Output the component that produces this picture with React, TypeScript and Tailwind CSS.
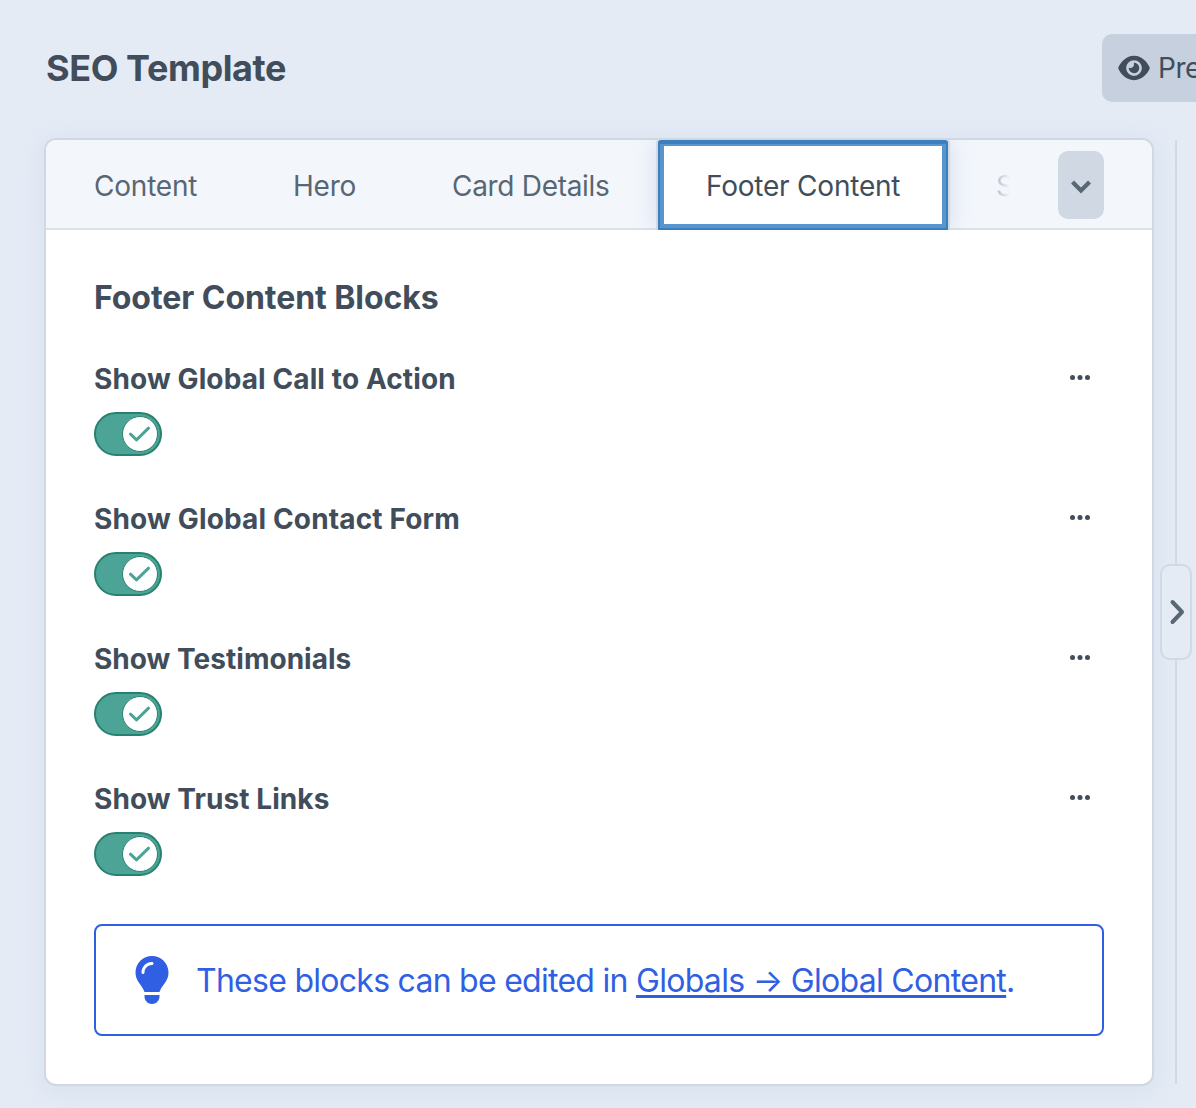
import { FaEye, FaLightbulb } from "react-icons/fa6";

const fields = [
  { label: "Show Global Call to Action", tracking: "tracking-[0.11px]" },
  { label: "Show Global Contact Form", tracking: "tracking-[0.15px]" },
  { label: "Show Testimonials", tracking: "tracking-[0.02px]" },
  { label: "Show Trust Links", tracking: "tracking-[0.07px]" },
];

function Switch() {
  return (
    <button className="flex h-11 w-[68px] items-center justify-end rounded-full border-2 border-[#27816f] bg-[#4ca497] pr-[2px]">
      <span className="flex size-9 items-center justify-center rounded-full border-[1.5px] border-[#27816f] bg-white pr-px">
        <svg width="22" height="16" viewBox="0 0 22 16" fill="none" stroke="#4ca497" strokeWidth="3" strokeLinecap="round" strokeLinejoin="round">
          <path d="M1.5 8.2 L7.5 13.8 L19.5 2.2" />
        </svg>
      </span>
    </button>
  );
}

function Dots() {
  return (
    <svg className="mt-[14px] mr-[14px]" width="20" height="5" viewBox="0 0 20 5" fill="#414d5b">
      <circle cx="2.5" cy="2.5" r="2.5" />
      <circle cx="10" cy="2.5" r="2.5" />
      <circle cx="17.5" cy="2.5" r="2.5" />
    </svg>
  );
}

export default function App() {
  return (
    <div className="flex h-[1108px] w-[1196px] flex-col overflow-hidden bg-[#e4ebf5] font-['Inter',sans-serif] text-[#414d5b]">
      <header className="flex h-[138px] shrink-0 items-start justify-between pt-[34px] pl-[46px]">
        <h1 className="text-[36px] leading-[68px] font-bold tracking-[-0.4px] whitespace-nowrap">SEO Template</h1>
        <div className="flex h-[68px] w-[94px] shrink-0 items-center gap-2 overflow-hidden rounded-l-[10px] bg-[#c7d0df] pl-4">
          <FaEye className="h-7 w-8 shrink-0" />
          <span className="text-[28px] tracking-[-0.5px] whitespace-nowrap">Preview</span>
        </div>
      </header>

      <div className="flex shrink-0 pl-11">
        <main className="h-[948px] w-[1110px] shrink-0 overflow-hidden rounded-xl border-2 border-[#cfd8e4] bg-white shadow-[0_4px_24px_rgba(150,170,205,0.16)]">
          <nav className="flex h-[90px] border-b-2 border-[#dce2e9] bg-[#f3f7fc] text-[28px] leading-[92px] whitespace-nowrap text-[#596673]">
            <div className="w-[199px] shrink-0 pl-12 tracking-[-0.2px]">Content</div>
            <div className="w-[159px] shrink-0 pl-12 tracking-[-0.2px]">Hero</div>
            <div className="w-[254px] shrink-0 pl-12 tracking-[-0.3px]">Card Details</div>
            <div className="z-10 h-[90px] w-[290px] shrink-0 rounded-t-[3px] border-2 border-t-4 border-[#3a80bf] bg-[#5895cd] px-1 pt-[2px] pb-1 shadow-[0_0_0_2px_rgba(205,213,224,0.8),0_0_24px_rgba(150,170,205,0.4)] [clip-path:inset(0_-30px_0_-30px)]">
              <div className="h-[78px] bg-white pl-[42px] leading-[80px] tracking-[-0.22px] text-[#414d5b]">Footer Content</div>
            </div>
            <div className="ml-12 w-[14px] shrink-0 overflow-hidden bg-linear-to-r from-[#b3bcc6] to-[#f3f7fc] bg-clip-text text-transparent">S</div>
            <button className="mt-[11px] ml-[48px] flex h-[68px] w-[46px] items-center justify-center rounded-[10px] bg-[#d0d8e3] pt-[3px]">
              <svg width="22" height="16" viewBox="0 0 22 16" fill="none" stroke="#596673" strokeWidth="4.2">
                <path d="M2.5 3 L11 11.5 L19.5 3" />
              </svg>
            </button>
          </nav>

          <section className="px-12 pt-12">
            <h2 className="h-[78px] text-[32px] leading-10 font-bold tracking-[-0.06px]">Footer Content Blocks</h2>
            {fields.map((f) => (
              <div key={f.label} className="h-[140px] pt-[2px]">
                <div className="flex h-[54px] justify-between pt-[3px]">
                  <h3 className={`text-[28px] leading-9 font-bold whitespace-nowrap ${f.tracking}`}>{f.label}</h3>
                  <Dots />
                </div>
                <Switch />
              </div>
            ))}
            <aside className="mt-2 flex h-28 items-center rounded-lg border-2 border-[#315fe3] pl-[38px] text-[#315fe3]">
              <FaLightbulb className="h-12 w-9 shrink-0" />
              <p className="ml-[26px] pt-[2px] text-[32px] tracking-[-0.73px] whitespace-nowrap">
                These blocks can be edited in{" "}
                <a className="tracking-[-0.7px] underline decoration-[3px] underline-offset-[3px]">Globals → Global Content</a>.
              </p>
            </aside>
          </section>
        </main>

        <div className="ml-[6px] flex w-8 flex-col items-center py-[2px]">
          <div className="h-[424px] w-[2px] bg-[#d1d9e4]" />
          <button className="flex h-24 w-8 items-center justify-center rounded-[10px] border-2 border-[#d1d9e4] bg-[#e4ebf5] pl-px">
            <svg width="16" height="26" viewBox="0 0 16 26" fill="none" stroke="#596673" strokeWidth="4" strokeLinecap="round" strokeLinejoin="round">
              <path d="M3.5 3 L13 13 L3.5 23" />
            </svg>
          </button>
          <div className="h-[424px] w-[2px] bg-[#d1d9e4]" />
        </div>
      </div>
    </div>
  );
}
